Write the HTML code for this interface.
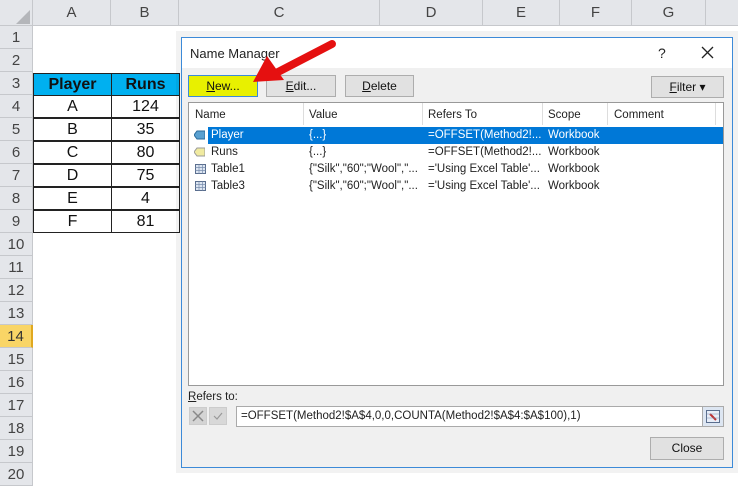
<!DOCTYPE html>
<html><head><style>
*{margin:0;padding:0;box-sizing:border-box}
body{width:738px;height:471px;overflow:hidden;background:#fff;font-family:"Liberation Sans",sans-serif;position:relative}
.abs{position:absolute}
.ch{position:absolute;top:0;height:26px;background:#e4e6ea;border-right:1px solid #c6c8cc;border-bottom:1px solid #c6c8cc;color:#444;font-size:15px;text-align:center;line-height:26px}
.rh{position:absolute;left:0;width:33px;height:23px;background:#e4e6ea;border-bottom:1px solid #c6c8cc;border-right:1px solid #c6c8cc;color:#444;font-size:15px;text-align:center;line-height:23px}
.cell{position:absolute;height:23px;border:1px solid #222;font-size:16px;text-align:center;line-height:21px;color:#111}
.btn{position:absolute;height:22px;background:#e1e1e1;border:1px solid #adadad;font-size:12px;text-align:center;line-height:20px;color:#111}
.t{position:absolute;font-size:11.5px;color:#222;white-space:nowrap}
.ic{position:absolute;width:11px;height:10px}
</style></head><body>
<div class="ch" style="left:0;width:33px"></div>
<svg class="abs" style="left:16px;top:10px" width="14" height="14"><polygon points="14,0 14,14 0,14" fill="#b4b6ba"/></svg>
<div class="ch" style="left:33px;width:78px">A</div>
<div class="ch" style="left:111px;width:68px">B</div>
<div class="ch" style="left:179px;width:201px">C</div>
<div class="ch" style="left:380px;width:103px">D</div>
<div class="ch" style="left:483px;width:77px">E</div>
<div class="ch" style="left:560px;width:72px">F</div>
<div class="ch" style="left:632px;width:74px">G</div>
<div class="ch" style="left:706px;width:32px;border-right:none"></div>

<div class="rh" style="top:26px">1</div><div class="rh" style="top:49px">2</div><div class="rh" style="top:72px">3</div><div class="rh" style="top:95px">4</div><div class="rh" style="top:118px">5</div><div class="rh" style="top:141px">6</div><div class="rh" style="top:164px">7</div><div class="rh" style="top:187px">8</div><div class="rh" style="top:210px">9</div><div class="rh" style="top:233px">10</div><div class="rh" style="top:256px">11</div><div class="rh" style="top:279px">12</div><div class="rh" style="top:302px">13</div><div class="rh" style="top:325px;background:#f9d566;border-right:2px solid #e0a820;color:#333">14</div><div class="rh" style="top:348px">15</div><div class="rh" style="top:371px">16</div><div class="rh" style="top:394px">17</div><div class="rh" style="top:417px">18</div><div class="rh" style="top:440px">19</div><div class="rh" style="top:463px">20</div>

<div class="cell" style="left:33px;top:73px;width:79px;background:#00b0f0;font-weight:bold">Player</div>
<div class="cell" style="left:111px;top:73px;width:69px;background:#00b0f0;font-weight:bold">Runs</div>
<div class="cell" style="left:33px;top:95px;width:79px">A</div><div class="cell" style="left:111px;top:95px;width:69px">124</div>
<div class="cell" style="left:33px;top:118px;width:79px">B</div><div class="cell" style="left:111px;top:118px;width:69px">35</div>
<div class="cell" style="left:33px;top:141px;width:79px">C</div><div class="cell" style="left:111px;top:141px;width:69px">80</div>
<div class="cell" style="left:33px;top:164px;width:79px">D</div><div class="cell" style="left:111px;top:164px;width:69px">75</div>
<div class="cell" style="left:33px;top:187px;width:79px">E</div><div class="cell" style="left:111px;top:187px;width:69px">4</div>
<div class="cell" style="left:33px;top:210px;width:79px">F</div><div class="cell" style="left:111px;top:210px;width:69px">81</div>

<!-- dialog -->
<div class="abs" style="left:176px;top:31px;width:564px;height:442px;background:rgba(0,0,0,0.05)"></div>
<div class="abs" style="left:181px;top:37px;width:552px;height:431px;background:#f0f0f0;border:1px solid #3c8ad8"></div>
<div class="abs" style="left:182px;top:38px;width:550px;height:30px;background:#fff"></div>
<div class="t" style="left:190px;top:46px;font-size:13px">Name Manager</div>
<div class="t" style="left:658px;top:45px;font-size:14px">?</div>
<svg class="abs" style="left:701px;top:46px" width="13" height="13"><path d="M1 1L12 12M12 1L1 12" stroke="#222" stroke-width="1.3"/></svg>

<div class="btn" style="left:188px;top:75px;width:70px;background:#e8f000;border-color:#3c8ad8"><u>N</u>ew...</div>
<div class="btn" style="left:266px;top:75px;width:70px"><u>E</u>dit...</div>
<div class="btn" style="left:345px;top:75px;width:69px"><u>D</u>elete</div>
<div class="btn" style="left:651px;top:76px;width:73px;"><u>F</u>ilter ▾</div>

<div class="abs" style="left:188px;top:102px;width:536px;height:284px;background:#fff;border:1px solid #999"></div>
<div class="abs" style="left:303px;top:103px;width:1px;height:22px;background:#ddd"></div>
<div class="abs" style="left:422px;top:103px;width:1px;height:22px;background:#ddd"></div>
<div class="abs" style="left:542px;top:103px;width:1px;height:22px;background:#ddd"></div>
<div class="abs" style="left:607px;top:103px;width:1px;height:22px;background:#ddd"></div>
<div class="abs" style="left:715px;top:103px;width:1px;height:22px;background:#ddd"></div>
<div class="t" style="left:195px;top:109px">Name</div>
<div class="t" style="left:309px;top:109px">Value</div>
<div class="t" style="left:428px;top:109px">Refers To</div>
<div class="t" style="left:548px;top:109px">Scope</div>
<div class="t" style="left:614px;top:109px">Comment</div>

<div class="abs" style="left:208px;top:127px;width:515px;height:17px;background:#0078d7"></div>
<svg class="ic" style="left:194px;top:130px"><path d="M3 1H11V9H3L0 5Z" fill="#5aa0d0" stroke="#2a6a9a"/></svg>
<div class="t" style="left:211px;top:129px;color:#fff">Player</div>
<div class="t" style="left:309px;top:129px;color:#fff">{...}</div>
<div class="t" style="left:428px;top:129px;color:#fff">=OFFSET(Method2!...</div>
<div class="t" style="left:548px;top:129px;color:#fff">Workbook</div>

<svg class="ic" style="left:194px;top:147px"><path d="M3 1H11V9H3L0 5Z" fill="#f0eaa0" stroke="#999"/></svg>
<div class="t" style="left:211px;top:146px">Runs</div>
<div class="t" style="left:309px;top:146px">{...}</div>
<div class="t" style="left:428px;top:146px">=OFFSET(Method2!...</div>
<div class="t" style="left:548px;top:146px">Workbook</div>

<svg class="ic" style="left:195px;top:164px"><rect x=".5" y=".5" width="10" height="9" fill="#dde6f2" stroke="#5a6e8e"/><path d="M0.5 3.5H10.5M0.5 6.5H10.5M4 .5V9.5M7.5 .5V9.5" stroke="#7a8eae" stroke-width=".7"/></svg>
<div class="t" style="left:211px;top:163px">Table1</div>
<div class="t" style="left:309px;top:163px">{"Silk","60";"Wool","...</div>
<div class="t" style="left:428px;top:163px">='Using Excel Table'...</div>
<div class="t" style="left:548px;top:163px">Workbook</div>

<svg class="ic" style="left:195px;top:181px"><rect x=".5" y=".5" width="10" height="9" fill="#dde6f2" stroke="#5a6e8e"/><path d="M0.5 3.5H10.5M0.5 6.5H10.5M4 .5V9.5M7.5 .5V9.5" stroke="#7a8eae" stroke-width=".7"/></svg>
<div class="t" style="left:211px;top:180px">Table3</div>
<div class="t" style="left:309px;top:180px">{"Silk","60";"Wool","...</div>
<div class="t" style="left:428px;top:180px">='Using Excel Table'...</div>
<div class="t" style="left:548px;top:180px">Workbook</div>

<div class="t" style="left:188px;top:391px"><u>R</u>efers to:</div>
<div class="abs" style="left:189px;top:407px;width:18px;height:18px;background:#d4d4d4;border:1px solid #ccc"></div>
<svg class="abs" style="left:191px;top:409px" width="14" height="14"><path d="M2 2L12 12M12 2L2 12" stroke="#888" stroke-width="1.5"/></svg>
<div class="abs" style="left:209px;top:407px;width:18px;height:18px;background:#d8d8d8;border:1px solid #ccc"></div>
<svg class="abs" style="left:211px;top:409px" width="14" height="14"><path d="M3 7L6 10L11 4" stroke="#999" stroke-width="1.2" fill="none"/></svg>
<div class="abs" style="left:236px;top:406px;width:488px;height:21px;background:#fff;border:1px solid #aaa"></div>
<div class="t" style="left:241px;top:410px">=OFFSET(Method2!$A$4,0,0,COUNTA(Method2!$A$4:$A$100),1)</div>
<div class="abs" style="left:702px;top:407px;width:21px;height:19px;background:#dde6f2;border-left:1px solid #aaa"></div>
<svg class="abs" style="left:706px;top:410px" width="14" height="13"><rect x=".5" y=".5" width="13" height="12" fill="#e8eef8" stroke="#5a6e8e"/><path d="M4 4L10 10" stroke="#c03030" stroke-width="2"/><path d="M.5 4H13.5M.5 8H13.5" stroke="#7a8eae" stroke-width=".6"/></svg>
<div class="btn" style="left:650px;top:437px;width:74px;height:23px;line-height:21px">Close</div>

<svg class="abs" style="left:0;top:0" width="738" height="471"><path d="M332 44L278 72" stroke="#e51010" stroke-width="8" stroke-linecap="round"/><polygon points="253,82 267,56 284,80" fill="#e51010"/></svg>
</body></html>
